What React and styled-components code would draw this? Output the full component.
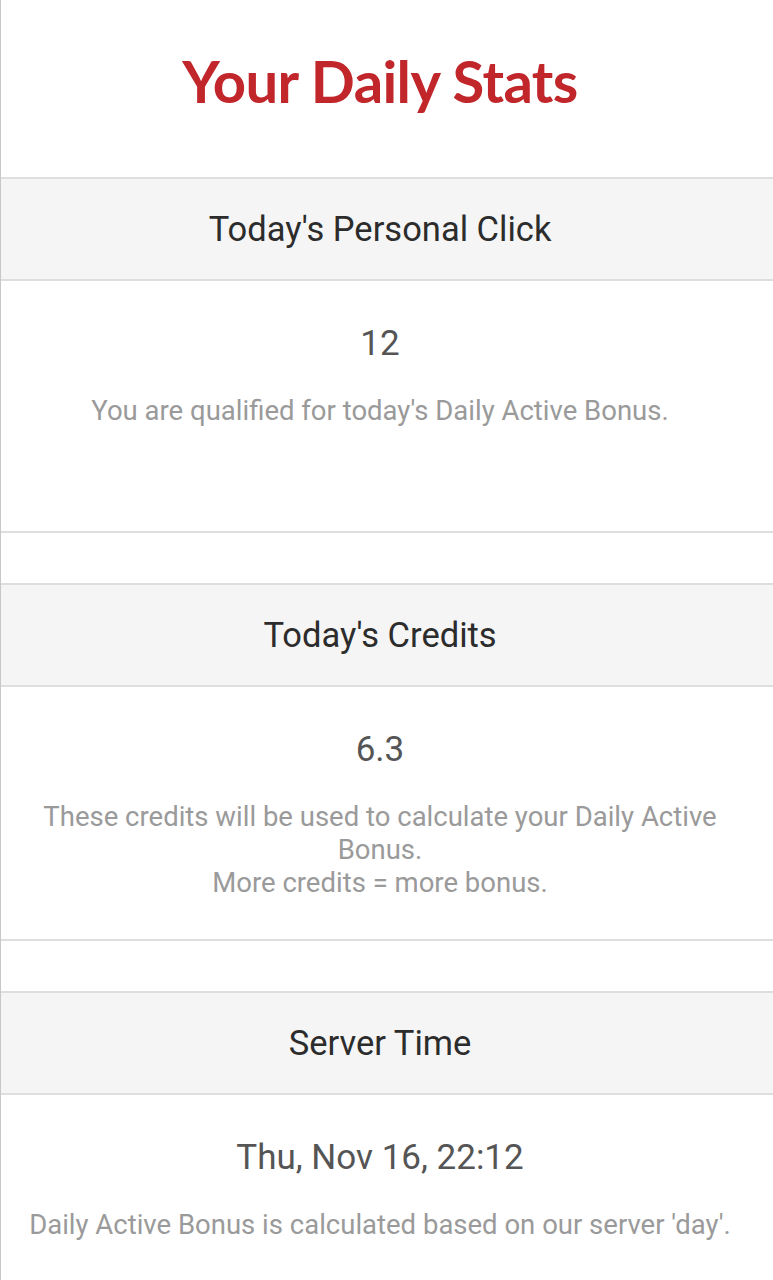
import styled, { createGlobalStyle } from 'styled-components'

const GlobalStyle = createGlobalStyle`
    body {
        margin: 0;
        background: #fff;
        font-family: Roboto, "Liberation Sans", sans-serif;
    }
`

const stats = [
    {
        title: "Today's Personal Click",
        value: '12',
        lines: ["You are qualified for today's Daily Active Bonus."],
    },
    {
        title: "Today's Credits",
        value: '6.3',
        lines: ['These credits will be used to calculate your Daily Active Bonus.', 'More credits = more bonus.'],
    },
    {
        title: 'Server Time',
        value: 'Thu, Nov 16, 22:12',
        lines: ["Daily Active Bonus is calculated based on our server 'day'."],
    },
]

const App = () => {
    return (
        <>
            <GlobalStyle />
            <Page>
                <TitleBar>
                    <Title>Your Daily Stats</Title>
                </TitleBar>
                {
                    stats.map((stat, index) => {
                        return (
                            <Panel key={index} $first={index === 0}>
                                <PanelHead>{stat.title}</PanelHead>
                                <PanelBody>
                                    <Value>{stat.value}</Value>
                                    <Note>
                                        {stat.lines.map((line, i) => <span key={i}>{line}</span>)}
                                    </Note>
                                </PanelBody>
                            </Panel>
                        )
                    })
                }
            </Page>
        </>
    )
}

const Page = styled.div`
    min-height: 1280px;
    border-left: 1px solid #c8c8c8;
    box-sizing: border-box;
`

const TitleBar = styled.header`
    height: 177px;
    box-sizing: border-box;
    padding-right: 14px;
    display: flex;
    align-items: center;
    justify-content: center;
`

const Title = styled.h1`
    margin: 0;
    padding-bottom: 16px;
    font-family: Lato, "Open Sans", sans-serif;
    font-weight: 700;
    font-size: 58px;
    letter-spacing: -0.6px;
    color: #c1262b;
`

const Panel = styled.section`
    margin-top: ${props => props.$first ? '0' : '50px'};
    border-top: 2px solid #dedede;
    border-bottom: 2px solid #dedede;
`

const PanelHead = styled.h2`
    margin: 0;
    height: 102px;
    box-sizing: border-box;
    padding-right: 14px;
    display: flex;
    align-items: center;
    justify-content: center;
    background: #f5f5f5;
    border-bottom: 2px solid #dedede;
    font-size: 34.5px;
    font-weight: 400;
    color: #2c2c2c;
`

const PanelBody = styled.div`
    min-height: 250px;
    box-sizing: border-box;
    padding: 42px 40px 40px 26px;
    display: flex;
    flex-direction: column;
    align-items: center;
    text-align: center;
`

const Value = styled.div`
    font-size: 35px;
    line-height: 42px;
    color: #555;
`

const Note = styled.p`
    margin: 29px 0 0;
    font-size: 27.5px;
    line-height: 33px;
    color: #9a9a9a;

    span {
        display: block;
    }
`

export default App
